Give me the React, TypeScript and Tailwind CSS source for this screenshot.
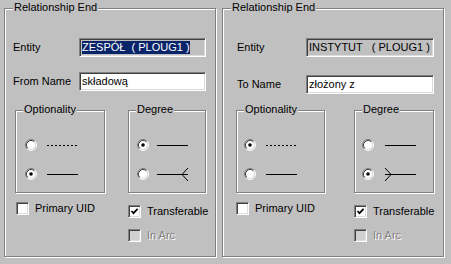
import React from "react";

const FONT = "font-['Liberation_Sans',Arial,sans-serif] text-[11px] text-black";

function Radio({ checked }: { checked?: boolean }) {
  return (
    <svg width="12" height="12" viewBox="0 0 12 12" className="shrink-0">
      <circle cx="6" cy="6" r="4.6" fill="#ffffff" />
      <path d="M2.11 9.89 A5.5 5.5 0 0 1 9.89 2.11" fill="none" stroke="#808080" strokeWidth="1" />
      <path d="M9.89 2.11 A5.5 5.5 0 0 1 2.11 9.89" fill="none" stroke="#ffffff" strokeWidth="1" />
      <path d="M2.82 9.18 A4.5 4.5 0 0 1 9.18 2.82" fill="none" stroke="#404040" strokeWidth="1" />
      <path d="M9.18 2.82 A4.5 4.5 0 0 1 2.82 9.18" fill="none" stroke="#dcdcdc" strokeWidth="1" />
      {checked && <circle cx="6" cy="6" r="1.8" fill="#000000" />}
    </svg>
  );
}

function Checkbox({ checked, disabled }: { checked?: boolean; disabled?: boolean }) {
  return (
    <div
      className={
        "w-[13px] h-[13px] shrink-0 border border-t-[#808080] border-l-[#808080] border-r-white border-b-white shadow-[inset_1px_1px_0_#404040,inset_-1px_-1px_0_#dcdcdc] flex items-center justify-center " +
        (disabled ? "bg-[#d0d0d0]" : "bg-white")
      }
    >
      {checked && (
        <svg width="9" height="9" viewBox="0 0 9 9">
          <polyline points="1.5,4 3.5,6.2 7.6,1.8" fill="none" stroke="#000" strokeWidth="1.7" />
        </svg>
      )}
    </div>
  );
}

function Line({ kind }: { kind: "dotted" | "solid" | "many-right" | "many-left" }) {
  return (
    <svg width="32" height="15" viewBox="0 0 32 15" className="shrink-0 mt-[2px]">
      {kind === "dotted" ? (
        <line x1="0" y1="7.5" x2="31" y2="7.5" stroke="#000" strokeWidth="1" strokeDasharray="2 2" />
      ) : (
        <line x1="0" y1="7.5" x2="31" y2="7.5" stroke="#000" strokeWidth="1" />
      )}
      {kind === "many-right" && (
        <path d="M31 1 L25 7.5 L31 14" fill="none" stroke="#000" strokeWidth="1" />
      )}
      {kind === "many-left" && (
        <path d="M0 1 L6 7.5 L0 14" fill="none" stroke="#000" strokeWidth="1" />
      )}
    </svg>
  );
}

const ETCH = "relative border border-[#808080] shadow-[inset_1px_1px_0_#fff,1px_1px_0_#fff]";

function Legend({ text, outer }: { text: string; outer?: boolean }) {
  return (
    <span
      className={
        "absolute top-[-8px] px-[1px] bg-[#c0c0c0] leading-[13px] whitespace-nowrap " +
        (outer ? "left-[8px]" : "left-[7px]")
      }
    >
      {text}
    </span>
  );
}

function TextBox({ children, white, wide }: { children: React.ReactNode; white?: boolean; wide?: boolean }) {
  return (
    <div
      className={
        "h-[19px] border border-t-[#808080] border-l-[#808080] border-r-white border-b-white shadow-[inset_1px_1px_0_#404040,inset_-1px_-1px_0_#dcdcdc] flex items-center pl-[2px] whitespace-pre leading-[13px] " +
        (white ? "bg-white " : "bg-[#c0c0c0] ") +
        (wide ? "w-[128px]" : "w-[127px]")
      }
    >
      {children}
    </div>
  );
}

function CheckRow({ label, checked, disabled }: { label: string; checked?: boolean; disabled?: boolean }) {
  return (
    <div className="flex items-center gap-[6px] leading-[13px]">
      <Checkbox checked={checked} disabled={disabled} />
      {disabled ? (
        <span className="text-[#808080] [text-shadow:1px_1px_0_#fff]">{label}</span>
      ) : (
        <span>{label}</span>
      )}
    </div>
  );
}

export default function App() {
  return (
    <div className={"w-[451px] h-[264px] bg-[#c0c0c0] flex pl-[4px] pt-[8px] gap-[6px] overflow-hidden " + FONT}>
      {/* Left panel */}
      <div className={ETCH + " w-[212px] h-[249px] flex flex-col"}>
        <Legend text="Relationship End" outer />
        <div className="mt-[29px] flex items-center">
          <span className="ml-[8px] w-[66px]">Entity</span>
          <TextBox>
            <span className="bg-[#0a246a] text-white">{"ZESPÓŁ  ( PLOUG1 )"}</span>
          </TextBox>
        </div>
        <div className="mt-[15px] flex items-center">
          <span className="ml-[8px] w-[66px]">From Name</span>
          <TextBox white>składową</TextBox>
        </div>
        <div className="mt-[19px] flex">
          <div className="ml-[10px] flex flex-col">
            <div className={ETCH + " w-[90px] h-[83px] flex flex-col pt-[25px] pl-[9px] gap-[12px]"}>
              <Legend text="Optionality" />
              <div className="flex items-center gap-[10px]">
                <Radio />
                <Line kind="dotted" />
              </div>
              <div className="flex items-center gap-[10px]">
                <Radio checked />
                <Line kind="solid" />
              </div>
            </div>
            <div className="mt-[9px] ml-[1px]">
              <CheckRow label="Primary UID" />
            </div>
          </div>
          <div className="ml-[23px] flex flex-col">
            <div className={ETCH + " w-[78px] h-[83px] flex flex-col pt-[25px] pl-[8px] gap-[12px]"}>
              <Legend text="Degree" />
              <div className="flex items-center gap-[8px]">
                <Radio checked />
                <Line kind="solid" />
              </div>
              <div className="flex items-center gap-[8px]">
                <Radio />
                <Line kind="many-right" />
              </div>
            </div>
            <div className="mt-[12px]">
              <CheckRow label="Transferable" checked />
            </div>
            <div className="mt-[11px]">
              <CheckRow label="In Arc" disabled />
            </div>
          </div>
        </div>
      </div>

      {/* Right panel */}
      <div className={ETCH + " w-[222px] h-[249px] flex flex-col"}>
        <Legend text="Relationship End" outer />
        <div className="mt-[29px] flex items-center">
          <span className="ml-[14px] w-[69px]">Entity</span>
          <TextBox wide>{"INSTYTUT   ( PLOUG1 )"}</TextBox>
        </div>
        <div className="mt-[18px] flex items-center">
          <span className="ml-[14px] w-[69px]">To Name</span>
          <TextBox white wide>złożony z</TextBox>
        </div>
        <div className="mt-[16px] flex">
          <div className="ml-[13px] flex flex-col">
            <div className={ETCH + " w-[89px] h-[83px] flex flex-col pt-[25px] pl-[7px] gap-[12px]"}>
              <Legend text="Optionality" />
              <div className="flex items-center gap-[10px]">
                <Radio checked />
                <Line kind="dotted" />
              </div>
              <div className="flex items-center gap-[10px]">
                <Radio />
                <Line kind="solid" />
              </div>
            </div>
            <div className="mt-[9px]">
              <CheckRow label="Primary UID" />
            </div>
          </div>
          <div className="ml-[29px] flex flex-col">
            <div className={ETCH + " w-[80px] h-[83px] flex flex-col pt-[25px] pl-[7px] gap-[12px]"}>
              <Legend text="Degree" />
              <div className="flex items-center gap-[11px]">
                <Radio />
                <Line kind="solid" />
              </div>
              <div className="flex items-center gap-[11px]">
                <Radio checked />
                <Line kind="many-left" />
              </div>
            </div>
            <div className="mt-[12px]">
              <CheckRow label="Transferable" checked />
            </div>
            <div className="mt-[11px]">
              <CheckRow label="In Arc" disabled />
            </div>
          </div>
        </div>
      </div>
    </div>
  );
}
